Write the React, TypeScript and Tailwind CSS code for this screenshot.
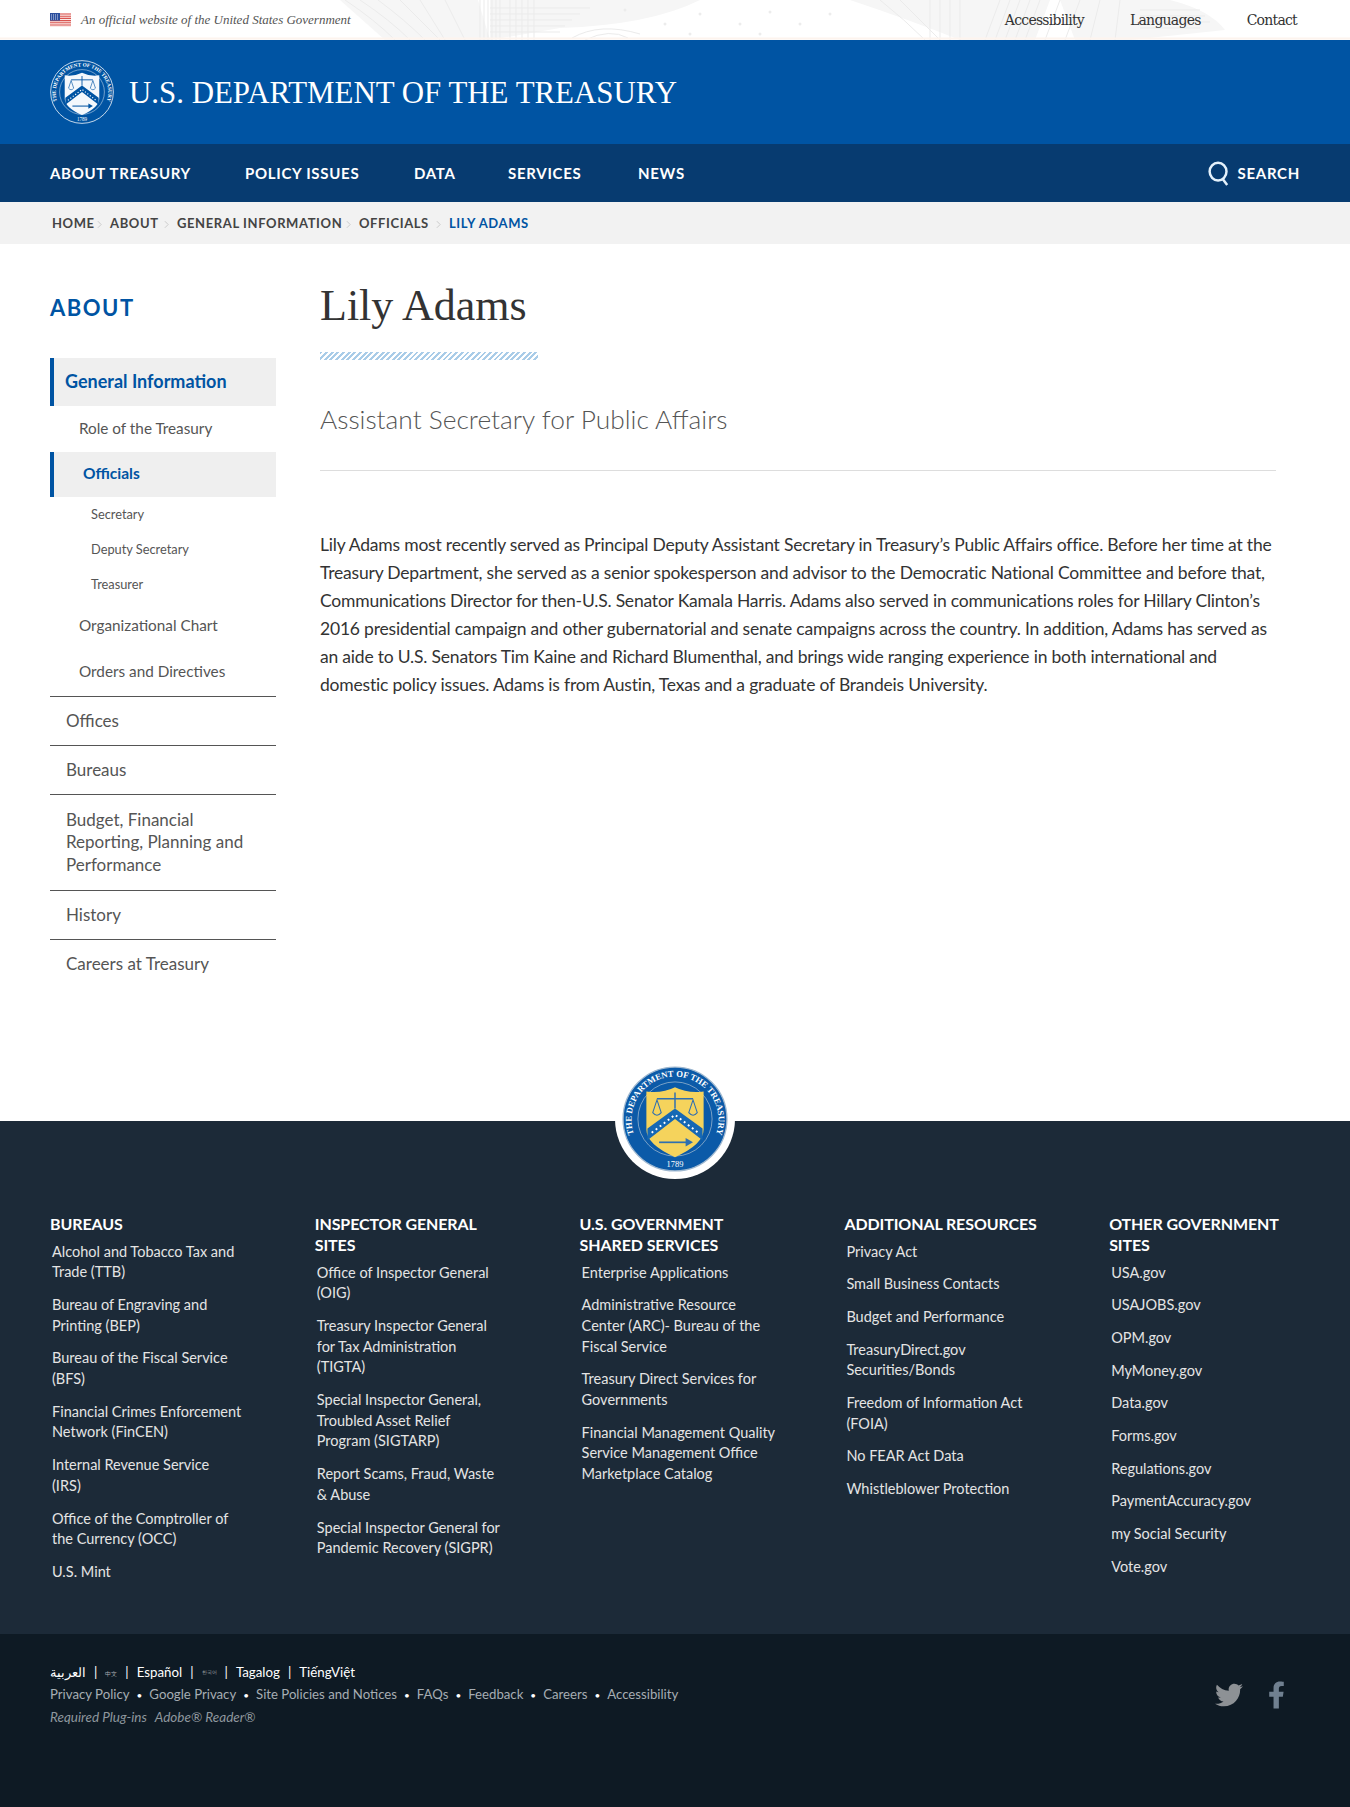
import React from 'react';
import { FaTwitter, FaFacebookF } from 'react-icons/fa';

const navItems = [
  { label: 'ABOUT TREASURY', w: 'w-[195px]' },
  { label: 'POLICY ISSUES', w: 'w-[169px]' },
  { label: 'DATA', w: 'w-[94px]' },
  { label: 'SERVICES', w: 'w-[130px]' },
  { label: 'NEWS', w: 'w-[70px]' },
];

const crumbs = [
  { label: 'HOME', w: 'w-[45px]' },
  { label: 'ABOUT', w: 'w-[54px]' },
  { label: 'GENERAL INFORMATION', w: 'w-[169px]' },
  { label: 'OFFICIALS', w: 'w-[77px]' },
];

const footerCols = [
  {
    title: 'BUREAUS',
    links: [
      'Alcohol and Tobacco Tax and\nTrade (TTB)',
      'Bureau of Engraving and\nPrinting (BEP)',
      'Bureau of the Fiscal Service\n(BFS)',
      'Financial Crimes Enforcement\nNetwork (FinCEN)',
      'Internal Revenue Service\n(IRS)',
      'Office of the Comptroller of\nthe Currency (OCC)',
      'U.S. Mint',
    ],
  },
  {
    title: 'INSPECTOR GENERAL\nSITES',
    links: [
      'Office of Inspector General\n(OIG)',
      'Treasury Inspector General\nfor Tax Administration\n(TIGTA)',
      'Special Inspector General,\nTroubled Asset Relief\nProgram (SIGTARP)',
      'Report Scams, Fraud, Waste\n& Abuse',
      'Special Inspector General for\nPandemic Recovery (SIGPR)',
    ],
  },
  {
    title: 'U.S. GOVERNMENT\nSHARED SERVICES',
    links: [
      'Enterprise Applications',
      'Administrative Resource\nCenter (ARC)- Bureau of the\nFiscal Service',
      'Treasury Direct Services for\nGovernments',
      'Financial Management Quality\nService Management Office\nMarketplace Catalog',
    ],
  },
  {
    title: 'ADDITIONAL RESOURCES',
    links: [
      'Privacy Act',
      'Small Business Contacts',
      'Budget and Performance',
      'TreasuryDirect.gov\nSecurities/Bonds',
      'Freedom of Information Act\n(FOIA)',
      'No FEAR Act Data',
      'Whistleblower Protection',
    ],
  },
  {
    title: 'OTHER GOVERNMENT\nSITES',
    links: [
      'USA.gov',
      'USAJOBS.gov',
      'OPM.gov',
      'MyMoney.gov',
      'Data.gov',
      'Forms.gov',
      'Regulations.gov',
      'PaymentAccuracy.gov',
      'my Social Security',
      'Vote.gov',
    ],
  },
];

const policyLinks = ['Privacy Policy', 'Google Privacy', 'Site Policies and Notices', 'FAQs', 'Feedback', 'Careers', 'Accessibility'];

const bodyText =
  'Lily Adams most recently served as Principal Deputy Assistant Secretary in Treasury’s Public Affairs office. Before her time at the\nTreasury Department, she served as a senior spokesperson and advisor to the Democratic National Committee and before that,\nCommunications Director for then-U.S. Senator Kamala Harris. Adams also served in communications roles for Hillary Clinton’s\n2016 presidential campaign and other gubernatorial and senate campaigns across the country. In addition, Adams has served as\nan aide to U.S. Senators Tim Kaine and Richard Blumenthal, and brings wide ranging experience in both international and\ndomestic policy issues. Adams is from Austin, Texas and a graduate of Brandeis University.';

const Seal = ({ id, color }: { id: string; color: boolean }) => {
  const ring = color ? '#0b5aa8' : 'none';
  const line = color ? '#9fb8d0' : '#ffffff';
  const shield = color ? '#f5d35c' : '#f4f8fc';
  const chevron = color ? '#1668b4' : '#0054a3';
  const ink = color ? '#2f6fb0' : '#0054a3';
  return (
    <svg viewBox="0 0 100 100" className="block w-full h-full">
      <defs>
        <path id={id} d="M 21 80 A 41 41 0 1 1 79 80" />
      </defs>
      <circle cx="50" cy="50" r="49" fill={ring} stroke={line} strokeWidth="1.2" />
      <circle cx="50" cy="50" r="35" fill="none" stroke={line} strokeWidth="0.7" />
      <text fill="#ffffff" fontSize="8.2" fontFamily="Liberation Serif, serif" fontWeight="700">
        <textPath href={`#${id}`} startOffset="50%" textAnchor="middle">
          THE DEPARTMENT OF THE TREASURY
        </textPath>
      </text>
      <text x="50" y="95" textAnchor="middle" fill="#ffffff" fontSize="8" fontFamily="Liberation Serif, serif">
        1789
      </text>
      <path d="M23 24 Q38 26 50 20 Q62 26 77 24 V60 Q77 74 50 86 Q23 74 23 60 Z" fill={shield} />
      <path d="M33 31 H67 M50 25 V40" stroke={ink} strokeWidth="1.4" fill="none" />
      <path d="M29 44 Q33 49 37 44 L33 32 Z M63 44 Q67 49 71 44 L67 32 Z" fill="none" stroke={ink} strokeWidth="1" />
      <path d="M24 70 L50 50 L76 70 V59 L50 40 L24 59 Z" fill={chevron} />
      <path d="M28 63 L50 46 L72 63" stroke="#ffffff" strokeWidth="1.8" strokeDasharray="1.8 3" fill="none" />
      <path d="M35 72 H64" stroke={ink} strokeWidth="1.6" />
      <path d="M60 68 L67 72 L60 76 Z" fill={ink} />
    </svg>
  );
};

const Flag = () => (
  <svg viewBox="0 0 21 14" className="w-[21px] h-[14px] block">
    <rect width="21" height="14" fill="#fbe9e6" />
    <path d="M0 1h21M0 3.2h21M0 5.4h21M0 7.6h21M0 9.8h21M0 12h21" stroke="#d9534f" strokeWidth="1.1" />
    <rect width="10" height="7.6" fill="#2c4f9e" />
    <path d="M1 2h8M1 4h8M1 6h8" stroke="#e8edf7" strokeWidth="0.9" strokeDasharray="1 1" />
  </svg>
);

// faded engraving behind the top bar
const TopPattern = () => (
  <svg className="absolute inset-0 w-full h-full" viewBox="0 0 1350 40" preserveAspectRatio="none" aria-hidden="true">
    <g fill="#f6f6f6">
      <path d="M340 0 H478 L490 40 H385 Z" />
      <path d="M490 0 H640 L700 0 Q650 25 560 28 L490 40 Z" />
      <path d="M850 0 H1050 L1035 40 H960 Q910 20 850 0 Z" />
      <path d="M1060 0 H1170 Q1210 10 1225 30 L1130 40 H1075 Z" />
    </g>
    <g stroke="#ebebeb" strokeWidth="1" fill="none">
      <path d="M345 0 Q375 20 395 40 M360 0 Q390 20 410 40 M378 0 Q405 20 425 40 M400 0 Q420 20 440 40 M420 0 L445 40 M445 0 L465 40" />
      <path d="M480 0 V40 M484 0 V40 M488 0 V40 M492 0 V40 M496 0 V40 M500 0 V40 M510 0 V40 M516 0 V40 M522 0 V40 M528 0 V40 M534 0 V40" />
      <path d="M490 8 H590 M490 14 H580 M490 20 H572 M490 26 H565 M490 32 H560" />
      <path d="M572 38 Q600 22 640 34 M585 40 Q610 28 628 38" />
      <path d="M880 0 Q905 20 925 40 M900 0 Q920 20 940 40 M930 0 V40 M940 0 V40 M950 0 V40 M960 0 V40" />
      <path d="M1000 0 L985 40 M1010 0 L995 40 M1020 0 L1005 40 M1030 0 L1015 40 M1040 0 L1025 40 M1060 0 L1045 40 M1080 0 L1065 40 M1100 0 L1090 40 M1120 0 L1115 40" />
      <path d="M1140 10 H1200 M1140 16 H1205 M1140 22 H1210 M1140 28 H1200" />
    </g>
    <g fill="#ececec">
      <circle cx="625" cy="10" r="1.5" /><circle cx="665" cy="24" r="1.5" /><circle cx="700" cy="14" r="1.5" />
      <circle cx="740" cy="24" r="1.5" /><circle cx="770" cy="12" r="1.5" /><circle cx="800" cy="24" r="1.5" />
      <circle cx="830" cy="14" r="1.5" /><circle cx="690" cy="34" r="1.5" /><circle cx="760" cy="34" r="1.5" />
    </g>
    <path d="M0 38.5 H1350" stroke="#fdf4ee" strokeWidth="2" />
  </svg>
);

const Chevron = () => (
  <svg viewBox="0 0 6 10" className="w-[5px] h-[9px] shrink-0">
    <path d="M1 1l4 4-4 4" fill="none" stroke="#c4c4c4" strokeWidth="1" />
  </svg>
);

const SideTop = ({ children, h = 'h-[49px]' }: { children: React.ReactNode; h?: string }) => (
  <div className={`flex items-center pl-[16px] text-[17px] text-[#555] border-t border-[#555] ${h}`}>{children}</div>
);

const App = () => {
  return (
    <div className="w-[1350px] h-[1807px] bg-white overflow-hidden font-[Lato,'Noto_Sans',sans-serif] text-[#333]">
      {/* official banner */}
      <div className="relative h-[40px] bg-white">
        <TopPattern />
        <div className="relative flex items-center h-full pl-[50px] pr-[53px]">
          <Flag />
          <span className="ml-[10px] text-[13px] italic text-[#555] font-['Liberation_Serif',serif]">
            An official website of the United States Government
          </span>
          <div className="ml-auto flex gap-[46px] text-[14px] text-[#333] font-['DejaVu_Serif',serif] tracking-[-0.75px]">
            <span>Accessibility</span>
            <span>Languages</span>
            <span>Contact</span>
          </div>
        </div>
      </div>

      {/* title */}
      <div className="flex items-center h-[104px] pl-[50px] bg-[#0054a3]">
        <div className="w-[64px] h-[64px]">
          <Seal id="seal-top" color={false} />
        </div>
        <span className="ml-[15px] pt-[3px] text-[30.9px] text-white font-['Liberation_Serif',serif]">
          U.S. DEPARTMENT OF THE TREASURY
        </span>
      </div>

      {/* nav */}
      <div className="flex items-center h-[58px] pl-[50px] pr-[50px] bg-[#073b70] text-white">
        {navItems.map((item) => (
          <span key={item.label} className={`${item.w} text-[15px] font-bold tracking-[0.7px] whitespace-nowrap`}>
            {item.label}
          </span>
        ))}
        <div className="ml-auto flex items-center gap-[7px]">
          <svg viewBox="0 0 24 26" className="w-[23px] h-[25px]" fill="none" stroke="#e4f1fb" strokeWidth="2.6">
            <ellipse cx="10.5" cy="11" rx="8.8" ry="9.2" />
            <path d="M15.5 19l4.5 6" />
          </svg>
          <span className="text-[15px] font-bold tracking-[0.7px]">SEARCH</span>
        </div>
      </div>

      {/* breadcrumb */}
      <div className="flex items-center h-[42px] pl-[52px] pt-[2px] bg-[#f2f2f2] text-[13px] font-bold tracking-[0.6px] text-[#444]">
        {crumbs.map((c) => (
          <React.Fragment key={c.label}>
            <span className={`${c.w} whitespace-nowrap`}>{c.label}</span>
            <Chevron />
            <span className="w-[8px]" />
          </React.Fragment>
        ))}
        <span className="text-[#0054a3]">LILY ADAMS</span>
      </div>

      {/* content */}
      <div className="flex h-[877px] pl-[50px]">
        <aside className="w-[226px] shrink-0 pt-[50px]">
          <h2 className="h-[64px] text-[22px] leading-[28px] font-bold tracking-[1.5px] text-[#0054a3]">ABOUT</h2>
          <div className="flex items-center h-[48px] border-l-4 border-[#0054a3] bg-[#efefef] pl-[11px] pb-[2px] text-[18px] font-bold text-[#0054a3]">
            General Information
          </div>
          <div className="flex items-center h-[46px] pl-[29px] pb-[2px] text-[15.3px] text-[#555]">Role of the Treasury</div>
          <div className="flex items-center h-[45px] border-l-4 border-[#0054a3] bg-[#efefef] pl-[29px] pb-[2px] text-[15.5px] font-bold text-[#0054a3]">
            Officials
          </div>
          <div className="flex items-center h-[35px] pl-[41px] text-[12.8px] text-[#555]">Secretary</div>
          <div className="flex items-center h-[35px] pl-[41px] text-[12.8px] text-[#555]">Deputy Secretary</div>
          <div className="flex items-center h-[35px] pl-[41px] text-[12.8px] text-[#555]">Treasurer</div>
          <div className="flex items-center h-[46px] pl-[29px] text-[15.3px] text-[#555]">Organizational Chart</div>
          <div className="flex items-center h-[48px] pl-[29px] pb-[2px] text-[15.3px] text-[#555]">Orders and Directives</div>
          <SideTop>Offices</SideTop>
          <SideTop>Bureaus</SideTop>
          <SideTop h="h-[96px]">
            <span className="leading-[22.5px]">
              Budget, Financial
              <br />
              Reporting, Planning and
              <br />
              Performance
            </span>
          </SideTop>
          <SideTop>History</SideTop>
          <SideTop>Careers at Treasury</SideTop>
        </aside>

        <main className="w-[956px] ml-[44px] pt-[34px]">
          <h1 className="h-[74px] text-[44px] leading-[56px] text-[#333] font-['Liberation_Serif',serif]">Lily Adams</h1>
          <div className="w-[218px] h-[8px] bg-[repeating-linear-gradient(135deg,#a9cce8_0,#a9cce8_2px,#ffffff_2px,#ffffff_4px)]" />
          <h2 className="mt-[42px] h-[68px] text-[26.3px] leading-[34px] font-light text-[#555]">
            Assistant Secretary for Public Affairs
          </h2>
          <div className="border-t border-[#dddddd]" />
          <p className="mt-[60px] text-[17.5px] leading-[28px] tracking-[-0.2px] text-[#333] whitespace-pre">{bodyText}</p>
        </main>
      </div>

      {/* footer */}
      <footer className="relative h-[513px] bg-[#1c2a38] pt-[92px] pl-[50px]">
        <div className="absolute left-[615px] top-[-62px] w-[120px] h-[120px] rounded-full bg-white p-[7px]">
          <Seal id="seal-footer" color />
        </div>
        <div className="grid grid-cols-[repeat(5,264.8px)]">
          {footerCols.map((col) => (
            <div key={col.title}>
              <h3 className="text-[16px] leading-[21px] font-bold tracking-[-0.1px] text-white whitespace-pre-line">{col.title}</h3>
              <ul className="mt-[7.5px] pl-[2px] flex flex-col gap-[12px]">
                {col.links.map((link) => (
                  <li key={link} className="text-[14.5px] leading-[20.7px] text-[#e4e4e4] whitespace-pre-line">
                    {link}
                  </li>
                ))}
              </ul>
            </div>
          ))}
        </div>
      </footer>

      <div className="flex justify-between h-[173px] bg-[#0e1a24] pl-[50px] pr-[65px] pt-[29px]">
        <div>
          <div className="flex items-center gap-[8px] h-[20px] text-[13.3px] text-white">
            <span className="font-['Noto_Sans',sans-serif]">العربية</span>
            <span>|</span>
            <span className="text-[6px] text-[#a9adb1]">中文</span>
            <span>|</span>
            <span>Español</span>
            <span>|</span>
            <span className="text-[5px] text-[#a9adb1]">한국어</span>
            <span>|</span>
            <span>Tagalog</span>
            <span>|</span>
            <span>TiếngViệt</span>
          </div>
          <div className="flex items-center gap-[7px] mt-[2px] h-[20px] text-[13.2px] text-[#a6adb3]">
            {policyLinks.map((link, i) => (
              <React.Fragment key={link}>
                {i > 0 && <span className="text-[10px] text-white">•</span>}
                <span>{link}</span>
              </React.Fragment>
            ))}
          </div>
          <div className="flex gap-[8px] mt-[2px] h-[20px] items-center text-[13.5px] italic text-[#8f979e]">
            <span>Required Plug-ins</span>
            <span>Adobe® Reader®</span>
          </div>
        </div>
        <div className="flex items-start gap-[24px] pt-[18px]">
          <FaTwitter className="w-[30px] h-[28px] text-[#8d9195]" />
          <FaFacebookF className="w-[17px] h-[28px] text-[#708090]" />
        </div>
      </div>
    </div>
  );
};

export default App;
